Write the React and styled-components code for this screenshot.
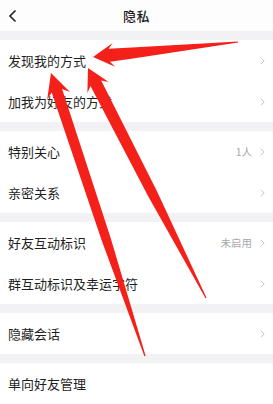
import React from 'react';
import styled, { createGlobalStyle } from 'styled-components';

const Global = createGlobalStyle`
  html, body {
    margin: 0;
    padding: 0;
    background: #f2f2f4;
  }
  body {
    font-family: "Noto Sans CJK SC", "Noto Sans", sans-serif;
  }
`;

const Page = styled.div`
  position: relative;
  width: 273px;
  height: 404px;
  overflow: hidden;
  background: #f2f2f4;
  display: flex;
  flex-direction: column;
`;

const Header = styled.div`
  height: 31px;
  background: #fdfdfd;
  display: flex;
  align-items: center;
  justify-content: center;
  position: relative;
  flex-shrink: 0;
`;

const Back = styled.div`
  position: absolute;
  left: 8px;
  top: 9px;
  width: 10px;
  height: 14px;
  display: flex;
`;

const Title = styled.div`
  font-size: 13px;
  font-weight: 500;
  color: #1c1c1c;
  letter-spacing: 0.5px;
`;

const Group = styled.div`
  margin-top: 9px;
  background: #fff;
  display: flex;
  flex-direction: column;
  flex-shrink: 0;
`;

const Row = styled.div`
  height: 41px;
  display: flex;
  align-items: center;
  padding: 0 8px 0 8px;
`;

const Label = styled.div`
  flex: 1;
  font-size: 13px;
  color: #1f1f1f;
`;

const Value = styled.div`
  font-size: 10.5px;
  color: #a8a8a8;
  margin-right: 8px;
`;

const Chevron = styled.svg`
  width: 5px;
  height: 8px;
  flex-shrink: 0;
`;

const Overlay = styled.svg`
  position: absolute;
  left: 0;
  top: 0;
  width: 273px;
  height: 404px;
  pointer-events: none;
`;

// arrow drawn from tip back to tail: head, then a shaft that holds its width
// for part of the way and then thins to a point
function arrowPoints([tx, ty], [ex, ey], headLen, headHalf, shaftHalf, hold) {
  const dx = ex - tx;
  const dy = ey - ty;
  const len = Math.hypot(dx, dy);
  const ux = dx / len;
  const uy = dy / len;
  const nx = -uy;
  const ny = ux;
  const p = (a, b) => [tx + ux * a + nx * b, ty + uy * a + ny * b];
  const mid = headLen + (len - headLen) * hold;
  const pts = [
    p(0, 0),
    p(headLen, headHalf),
    p(headLen * 0.78, shaftHalf),
    p(mid, shaftHalf * 0.85),
    p(len, 0.6),
    p(len, -0.6),
    p(mid, -shaftHalf * 0.85),
    p(headLen * 0.78, -shaftHalf),
    p(headLen, -headHalf),
  ];
  return pts.map(([x, y]) => `${x.toFixed(1)},${y.toFixed(1)}`).join(' ');
}

const arrows = [
  { tip: [93, 57], tail: [238, 42], head: 21, half: 12, shaft: 6.5, hold: 0.15 },
  { tip: [51, 73], tail: [145, 356], head: 24, half: 12, shaft: 5.5, hold: 0.55 },
  { tip: [88, 68], tail: [206, 298], head: 22, half: 12, shaft: 6, hold: 0.5 },
];

const ChevronIcon = () => (
  <Chevron viewBox="0 0 5 8">
    <polyline points="0.8,0.8 4.2,4 0.8,7.2" fill="none" stroke="#c6c6c6" strokeWidth="1" />
  </Chevron>
);

const Item = ({ label, value, arrow = true }) => (
  <Row>
    <Label>{label}</Label>
    {value && <Value>{value}</Value>}
    {arrow && <ChevronIcon />}
  </Row>
);

export default function App() {
  return (
    <Page>
      <Global />
      <Header>
        <Back>
          <svg width="10" height="14" viewBox="0 0 10 14">
            <polyline points="7.5,1.5 2,7 7.5,12.5" fill="none" stroke="#222" strokeWidth="1.6" />
          </svg>
        </Back>
        <Title>隐私</Title>
      </Header>
      <Group>
        <Item label="发现我的方式" />
        <Item label="加我为好友的方式" />
      </Group>
      <Group>
        <Item label="特别关心" value="1人" />
        <Item label="亲密关系" />
      </Group>
      <Group>
        <Item label="好友互动标识" value="未启用" />
        <Item label="群互动标识及幸运字符" />
      </Group>
      <Group>
        <Item label="隐藏会话" />
      </Group>
      <Group>
        <Item label="单向好友管理" arrow={false} />
      </Group>
      <Overlay viewBox="0 0 273 404">
        {arrows.map((a, i) => (
          <polygon
            key={i}
            points={arrowPoints(a.tip, a.tail, a.head, a.half, a.shaft, a.hold)}
            fill="#f4201a"
          />
        ))}
      </Overlay>
    </Page>
  );
}
